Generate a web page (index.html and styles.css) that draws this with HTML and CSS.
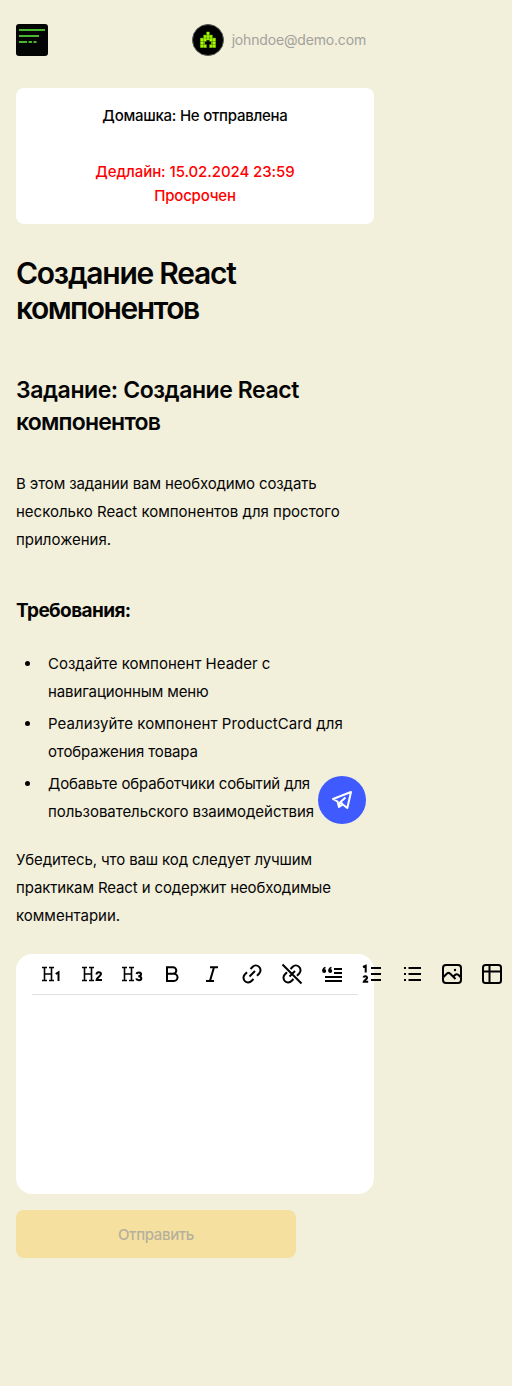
FILE: index.html
```
<!DOCTYPE html>
<html lang="ru">
<head>
<meta charset="utf-8">
<title>Создание React компонентов</title>
<link rel="stylesheet" href="styles.css">
</head>
<body>
<main class="page">
  <header class="header">
    <svg class="logo" viewBox="0 0 32 32"><rect width="32" height="32" rx="3" fill="#030504"/><path d="M3 6h26M3 12h20M3 18h8M12.500 18h3.500M17.500 18h3" stroke="#4ab52f" stroke-width="2" fill="none"/></svg>
    <div class="user">
      <svg class="avatar" viewBox="0 0 32 32"><circle cx="16" cy="16" r="15.500" fill="#000" stroke="#555b55"/><path d="M14.500 8h3v3h3v3h3v9.500h-6v-3h2v-3h-2v-1.500h-3v1.500h-2v3h2v3h-6v-9.500h3v-3h3z" fill="#a2fa00" stroke="#a2fa00" stroke-width=".4"/><path d="M8 14h16M8 17.500h16M8 20.500h16M11.500 11v13M14.500 8v15M17.500 8v15M20.500 11v13M11 11h10" stroke="#000" stroke-width=".25"/></svg>
      <span class="email">johndoe@demo.com</span>
    </div>
  </header>
  <section class="status">
    <p class="state">Домашка: Не отправлена</p>
    <p class="due deadline">Дедлайн: 15.02.2024 23:59</p>
    <p class="due overdue">Просрочен</p>
  </section>
  <h1>Создание React<br><span class="h1-tail">компонентов</span></h1>
  <h2>Задание: Создание React<br><span class="h2-tail">компонентов</span></h2>
  <p class="text"><span class="snug">В этом задании вам необходимо создать</span><br>несколько React компонентов для простого<br>приложения.</p>
  <h3>Требования:</h3>
  <ul class="list">
    <li>Создайте компонент Header с<br><span class="snug">навигационным меню</span></li>
    <li><span class="loose">Реализуйте компонент ProductCard для</span><br><span class="tight">отображения товара</span></li>
    <li><span class="tight">Добавьте обработчики событий для</span><br><span class="snug-list">пользовательского взаимодействия</span></li>
  </ul>
  <p class="text closing"><span class="snug">Убедитесь, что ваш код следует лучшим</span><br><span class="snug">практикам React и содержит необходимые</span><br>комментарии.</p>
  <section class="editor">
    <div class="toolbar">
      <svg viewBox="0 0 24 24"><path d="M2 5.500h5M9 5.500h5M2 18.500h5M9 18.500h5M4.500 5.500v13M11.500 5.500v13M4.500 12h7" stroke-width="1.600"/><path d="M15.700 12l2.800-1.700v8.700"/></svg>
      <svg viewBox="0 0 24 24"><path d="M2 5.500h5M9 5.500h5M2 18.500h5M9 18.500h5M4.500 5.500v13M11.500 5.500v13M4.500 12h7" stroke-width="1.600"/><path d="M16.500 12.500c0-3 4.500-3 4.500-.5 0 2-4.500 3.500-4.500 6h5.500"/></svg>
      <svg viewBox="0 0 24 24"><path d="M2 5.500h5M9 5.500h5M2 18.500h5M9 18.500h5M4.500 5.500v13M11.500 5.500v13M4.500 12h7" stroke-width="1.600"/><path d="M16.500 12c.5-2 4.500-1.800 4.500.3 0 1.500-1.500 2-2.700 2 1.500 0 3 .5 3 2.100 0 2.300-4.500 2.300-5 0"/></svg>
      <svg viewBox="0 0 24 24"><path d="M7 5.200h6a3.300 3.300 0 0 1 0 6.600H7h7a3.500 3.500 0 0 1 0 7.100H7z"/></svg>
      <svg viewBox="0 0 24 24"><path d="M10 5.200h8M6 18.900h8M14 5.200l-4 13.700"/></svg>
      <svg viewBox="0 0 24 24"><path d="M9.500 14.500l5.500-5.500M10.500 7l2-2a4.600 4.600 0 0 1 6.700 6.500l-2.200 2.200M7 10.300l-2.200 2.200a4.600 4.600 0 0 0 6.700 6.500l2-2"/></svg>
      <svg viewBox="0 0 24 24"><path d="M9.500 14.500l5.500-5.500M10.500 7l2-2a4.600 4.600 0 0 1 6.700 6.500l-2.200 2.200M7 10.300l-2.200 2.200a4.600 4.600 0 0 0 6.700 6.500l2-2M2.500 2.500l19 19"/></svg>
      <svg viewBox="0 0 24 24"><path d="M14 7h8M14 11h8M5 15h17M5 19h17"/><path d="M5.500 5.500q-2.500.5-2.500 3.500M11.500 5.500q-2.500.5-2.500 3.500" stroke-width="1.600"/><circle cx="4.200" cy="9" r="2" class="solid"/><circle cx="10.200" cy="9" r="2" class="solid"/></svg>
      <svg viewBox="0 0 24 24"><path d="M11 6h10M11 12h10M11 18h10"/><path d="M3 5l2.700-1.200v6.700M3.500 15.500c.5-2 4-1.500 3.500.5-.3 1.500-3 2-3.300 3.800h4.500"/></svg>
      <svg viewBox="0 0 24 24"><path d="M8.500 6h12.500M8.500 12h12.500M8.500 18h12.500M4 6h2M4 12h2M4 18h2"/></svg>
      <svg viewBox="0 0 24 24"><rect x="3" y="3" width="18" height="18" rx="3"/><path d="M3 15.500l4-4q1.500-1.300 3 0l5.500 5.500M13.500 14.500l1.500-1.500q1.700-1.500 3.500 0l2.500 2.500"/><circle cx="15" cy="8" r="1.200" class="solid"/></svg>
      <svg viewBox="0 0 24 24"><rect x="3" y="3" width="18" height="18" rx="2.500"/><path d="M3 9.500h18M9.500 3v18"/></svg>
    </div>
  </section>
  <button class="send" disabled>Отправить</button>
</main>
<button class="telegram" aria-label="Telegram"><svg viewBox="0 0 48 48"><path d="M15 23l18-7-3.700 16-4.500-3.500-3.800 2.500-1.500-5.500zM27.500 21.500l-5 4.500 2.300 2.500M22 26l-.8 4"/></svg></button>
</body>
</html>
```
FILE: styles.css
```
* { box-sizing: border-box; }
body { margin: 0; background: #f2efdb; color: #050505; font: 400 15px/28px Inter, sans-serif; min-height: 1386px; position: relative; overflow-x: hidden; }
button { font-family: inherit; border: 0; padding: 0; }
h1, h2, h3, p, ul { margin: 0; white-space: nowrap; }
svg { display: block; flex: none; }
.page { width: 390px; padding: 24px 16px; }
.header { display: flex; justify-content: space-between; height: 32px; width: 350px; }
.logo, .avatar { width: 32px; height: 32px; }
.user { display: flex; gap: 8px; align-items: center; }
.email { font-size: 14px; letter-spacing: -.17px; color: #a3a29b; }
.status { width: 358px; height: 136px; background: #fff; border-radius: 8px; margin-top: 32px; padding: 16px; text-align: center; font-weight: 500; line-height: 24px; }
.state { letter-spacing: -.25px; }
.due { color: #f00; }
.deadline { margin-top: 32px; letter-spacing: -.08px; }
.overdue { letter-spacing: -.2px; }
h1 { font-size: 30px; line-height: 35px; font-weight: 600; margin-top: 32px; letter-spacing: -1.25px; }
.h1-tail { letter-spacing: -1.5px; }
h2 { font-size: 23px; line-height: 32px; font-weight: 600; margin-top: 48px; letter-spacing: -.43px; }
.h2-tail { letter-spacing: -.78px; }
.text { margin-top: 32px; }
.text.closing { margin-top: 20px; }
.snug { letter-spacing: -.12px; }
.snug-list { letter-spacing: -.05px; }
.tight { letter-spacing: -.16px; }
.loose { letter-spacing: .07px; }
h3 { font-size: 19px; line-height: 28px; font-weight: 700; margin-top: 43px; letter-spacing: -.6px; }
.list { margin-top: 25px; padding-left: 26px; }
.list li { padding-left: 6px; }
.list li + li { margin-top: 4px; }
.editor { width: 358px; height: 240px; background: #fff; border-radius: 16px; margin-top: 24px; padding: 0 16px; }
.toolbar { display: flex; gap: 16px; height: 41px; padding: 8px; border-bottom: 1px solid #e0e0e0; }
.toolbar svg { width: 24px; height: 24px; fill: none; stroke: #000; stroke-width: 2; }
.toolbar .solid { fill: #000; stroke: none; }
.send { display: block; margin-top: 16px; width: 280px; height: 48px; border-radius: 8px; background: #f5e0a0; color: #b5b09c; font-size: 15px; font-weight: 500; letter-spacing: -.35px; }
.telegram { position: absolute; left: 318px; top: 776px; width: 48px; height: 48px; border-radius: 50%; background: #3f5bff; }
.telegram svg { width: 48px; height: 48px; fill: none; stroke: #fff; stroke-width: 2; stroke-linejoin: round; }
```
